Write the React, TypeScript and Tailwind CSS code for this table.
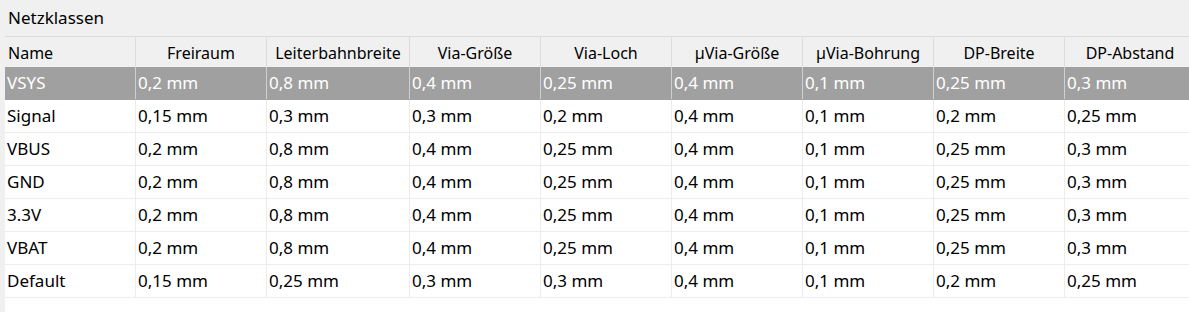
import React from "react";

const columns = [
  { label: "Name", width: "w-[131px]", left: true },
  { label: "Freiraum", width: "w-[131px]", left: false },
  { label: "Leiterbahnbreite", width: "w-[143px]", left: false },
  { label: "Via-Größe", width: "w-[131px]", left: false },
  { label: "Via-Loch", width: "w-[131px]", left: false },
  { label: "µVia-Größe", width: "w-[131px]", left: false },
  { label: "µVia-Bohrung", width: "w-[131px]", left: false },
  { label: "DP-Breite", width: "w-[131px]", left: false },
  { label: "DP-Abstand", width: "w-[131px]", left: false },
];

const rows = [
  ["VSYS", "0,2 mm", "0,8 mm", "0,4 mm", "0,25 mm", "0,4 mm", "0,1 mm", "0,25 mm", "0,3 mm"],
  ["Signal", "0,15 mm", "0,3 mm", "0,3 mm", "0,2 mm", "0,4 mm", "0,1 mm", "0,2 mm", "0,25 mm"],
  ["VBUS", "0,2 mm", "0,8 mm", "0,4 mm", "0,25 mm", "0,4 mm", "0,1 mm", "0,25 mm", "0,3 mm"],
  ["GND", "0,2 mm", "0,8 mm", "0,4 mm", "0,25 mm", "0,4 mm", "0,1 mm", "0,25 mm", "0,3 mm"],
  ["3.3V", "0,2 mm", "0,8 mm", "0,4 mm", "0,25 mm", "0,4 mm", "0,1 mm", "0,25 mm", "0,3 mm"],
  ["VBAT", "0,2 mm", "0,8 mm", "0,4 mm", "0,25 mm", "0,4 mm", "0,1 mm", "0,25 mm", "0,3 mm"],
  ["Default", "0,15 mm", "0,25 mm", "0,3 mm", "0,3 mm", "0,4 mm", "0,1 mm", "0,2 mm", "0,25 mm"],
];

export default function App() {
  const selected = 0; // VSYS is highlighted

  return (
    <div className="w-[1189px] h-[312px] bg-[#f0f0f0] overflow-hidden flex flex-col text-[17px] text-black font-['Noto_Sans','Open_Sans',sans-serif]">
      <div className="h-[36px] pl-2 flex items-center shrink-0">Netzklassen</div>

      <div className="ml-[5px] flex-1 bg-white border-t border-[#dcdcdc] overflow-hidden">
        {/* header */}
        <div className="flex h-[30px] bg-[#f0f0f0] w-max text-[16px]">
          {columns.map((col) => (
            <div
              key={col.label}
              className={`${col.width} shrink-0 h-full border-r border-[#dcdcdc] px-[3px] pt-[2px] flex items-center whitespace-nowrap ${
                col.left ? "justify-start" : "justify-center"
              }`}
            >
              {col.label}
            </div>
          ))}
        </div>

        {rows.map((row, i) => {
          const isSel = i === selected;
          return (
            <div
              key={row[0]}
              className={`flex h-[33px] w-max border-b ${
                isSel ? "bg-[#a0a0a0] text-white border-[#a0a0a0]" : "border-[#ececec]"
              }`}
            >
              {row.map((cell, j) => (
                <div
                  key={j}
                  className={`${columns[j].width} shrink-0 h-full border-r px-[2px] flex items-center whitespace-nowrap ${
                    isSel ? "border-[#d0d0d0]" : "border-[#ececec]"
                  }`}
                >
                  {cell}
                </div>
              ))}
            </div>
          );
        })}
      </div>
    </div>
  );
}
